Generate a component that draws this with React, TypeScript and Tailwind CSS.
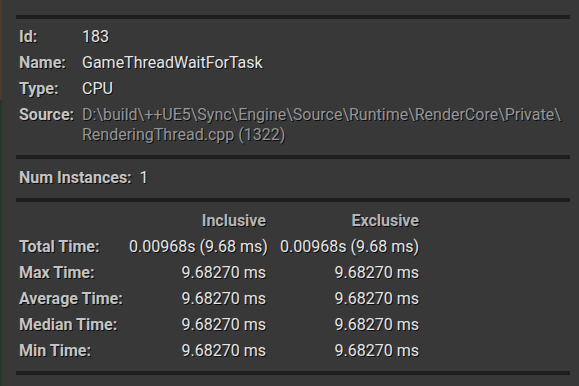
import React from 'react';

// Timer details panel (Unreal Insights style)

const shadow = '[text-shadow:1px_1px_0_#0c0c0c]';

function Bar() {
  return <div className="h-[4px] bg-[#1e1e1e]" />;
}

function InfoRow({ label, children }: { label: string; children: React.ReactNode }) {
  return (
    <div className="flex py-[3px] leading-[20px]">
      <div className={`w-[63px] shrink-0 font-bold text-[#c4c4c4] ${shadow}`}>{label}</div>
      <div className="min-w-0">{children}</div>
    </div>
  );
}

const stats = [
  { label: 'Total Time:', inc: '0.00968s (9.68 ms)', exc: '0.00968s (9.68 ms)' },
  { label: 'Max Time:', inc: '9.68270 ms', exc: '9.68270 ms' },
  { label: 'Average Time:', inc: '9.68270 ms', exc: '9.68270 ms' },
  { label: 'Median Time:', inc: '9.68270 ms', exc: '9.68270 ms' },
  { label: 'Min Time:', inc: '9.68270 ms', exc: '9.68270 ms' },
];

export default function App() {
  return (
    <div className="flex w-[579px] h-[386px] overflow-hidden bg-[#383838] font-['Roboto',sans-serif] text-[16px]">
      <div className="flex flex-col w-[2px] shrink-0">
        <div className="h-[100px] bg-[#4b3b28]" />
        <div className="flex-1 bg-[#24382a]" />
      </div>

      <div className="flex-1 pl-[14px] pr-[9px] pt-[15px]">
        <Bar />
        <div className="pl-[3px] pt-[5px]">
          <InfoRow label="Id:">
            <span className={`text-[#e6e6e6] ${shadow}`}>183</span>
          </InfoRow>
          <InfoRow label="Name:">
            <span className={`text-[#e6e6e6] ${shadow}`}>GameThreadWaitForTask</span>
          </InfoRow>
          <InfoRow label="Type:">
            <span className={`text-[#e6e6e6] ${shadow}`}>CPU</span>
          </InfoRow>
          <InfoRow label="Source:">
            <div className={`text-[#969696] ${shadow}`}>
              <div className="whitespace-nowrap">D:\build\++UE5\Sync\Engine\Source\Runtime\RenderCore\Private\</div>
              <div>RenderingThread.cpp (1322)</div>
            </div>
          </InfoRow>
        </div>

        <div className="mt-[7px]">
          <Bar />
        </div>
        <div className="pl-[3px] pt-[9px] pb-[3px] leading-[20px] flex gap-[8px]">
          <span className={`font-bold text-[#c4c4c4] ${shadow}`}>Num Instances:</span>
          <span className={`text-[#e6e6e6] ${shadow}`}>1</span>
        </div>

        <div className="mt-[7px]">
          <Bar />
        </div>
        <div className="pl-[3px] pt-[6px] grid grid-cols-[110px_137px_153px] auto-rows-[26px] items-center leading-[20px]">
          <div />
          <div className={`text-right font-bold text-[#b4b4b4] ${shadow}`}>Inclusive</div>
          <div className={`text-right font-bold text-[#b4b4b4] ${shadow}`}>Exclusive</div>
          {stats.map((s) => (
            <React.Fragment key={s.label}>
              <div className={`font-bold text-[#c4c4c4] whitespace-nowrap ${shadow}`}>{s.label}</div>
              <div className={`text-right text-[#e6e6e6] whitespace-nowrap ${shadow}`}>{s.inc}</div>
              <div className={`text-right text-[#e6e6e6] whitespace-nowrap ${shadow}`}>{s.exc}</div>
            </React.Fragment>
          ))}
        </div>

        <div className="mt-[7px]">
          <Bar />
        </div>
      </div>
    </div>
  );
}
